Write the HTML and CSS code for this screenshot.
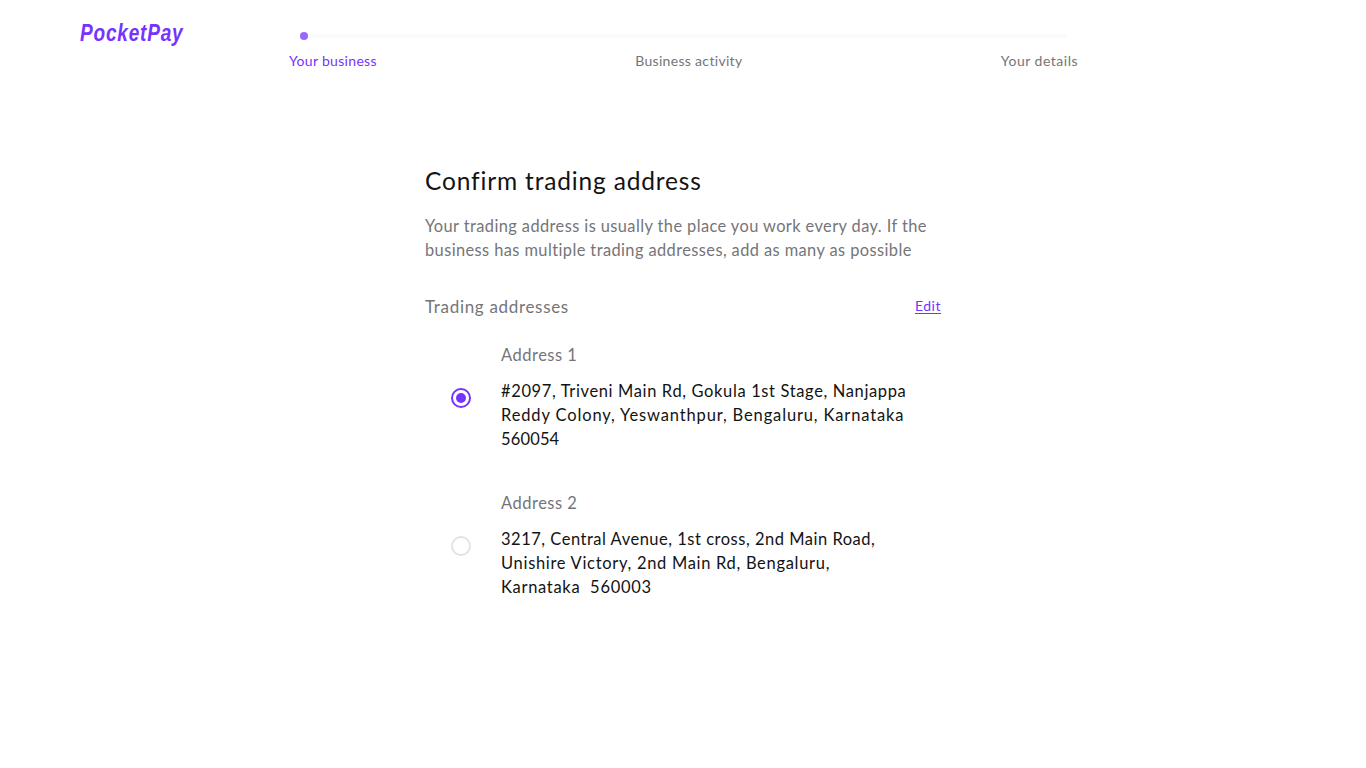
FILE: index.html
```html
<!DOCTYPE html>
<html lang="en">
<head>
<meta charset="utf-8">
<title>Confirm trading address</title>
<link rel="stylesheet" href="styles.css">
</head>
<body>
<header class="header">
  <div class="logo"><span class="logo-text">PocketPay</span></div>
  <nav class="progress">
    <div class="track"><span class="dot"></span></div>
    <div class="steps">
      <span class="step active">Your business</span>
      <span class="step">Business activity</span>
      <span class="step step-last">Your details</span>
    </div>
  </nav>
</header>
<main class="content">
  <h1 class="title">Confirm trading address</h1>
  <p class="intro">Your trading address is usually the place you work every day. If the<br>business has multiple trading addresses, add as many as possible</p>
  <div class="list-head">
    <h2 class="subtitle">Trading addresses</h2>
    <a class="edit" href="#">Edit</a>
  </div>
  <label class="address">
    <span class="radio checked"></span>
    <span class="details">
      <span class="name">Address 1</span>
      <span class="line">#2097, Triveni Main Rd, Gokula 1st Stage, Nanjappa</span>
      <span class="line wide">Reddy Colony, Yeswanthpur, Bengaluru, Karnataka</span>
      <span class="line postcode">560054</span>
    </span>
  </label>
  <label class="address">
    <span class="radio"></span>
    <span class="details">
      <span class="name">Address 2</span>
      <span class="line tight">3217, Central Avenue, 1st cross, 2nd Main Road,</span>
      <span class="line medium">Unishire Victory, 2nd Main Rd, Bengaluru,</span>
      <span class="line medium">Karnataka&nbsp; 560003</span>
    </span>
  </label>
</main>
</body>
</html>
```

FILE: styles.css
```css
* { box-sizing: border-box; }
body { margin: 0; background: #fff; font-family: Lato, sans-serif; font-variant-ligatures: none; color: #131313; }
.header { display: flex; height: 96px; padding: 19px 0 0 80px; }
.logo { width: 209px; color: #7633ff; font: italic bold 24px/28px "Liberation Sans", sans-serif; }
.logo-text { display: inline-block; letter-spacing: 1px; transform: scaleX(.793); transform-origin: left; }
.progress { width: 789px; padding-top: 15px; }
.track { display: flex; align-items: center; height: 4px; margin: 0 11px; background: #fafafa; border-radius: 2px; }
.dot { width: 8px; height: 8px; border-radius: 50%; background: #9b66ff; }
.steps { display: flex; justify-content: space-between; margin-top: 13px; font-size: 14px; line-height: 20px; letter-spacing: .32px; color: #757578; }
.steps .active { color: #7633ff; }
.step-last { letter-spacing: .5px; }
.content { width: 516px; margin: 69px 0 0 425px; }
.title { margin: 0; font-size: 24.5px; font-weight: 400; line-height: 32px; letter-spacing: .84px; }
.intro { margin: 17px 0 0; font-size: 16.4px; line-height: 24px; letter-spacing: .41px; color: #757578; white-space: nowrap; }
.list-head { display: flex; justify-content: space-between; align-items: flex-start; margin-top: 33px; height: 24px; }
.subtitle { margin: 0; font-size: 17px; font-weight: 400; line-height: 24px; letter-spacing: .68px; color: #757578; }
.edit { font-size: 14px; line-height: 20px; letter-spacing: .5px; padding-top: 1px; color: #7633ff; text-decoration-thickness: 1px; text-underline-offset: 2px; }
.address { display: flex; align-items: center; gap: 30px; height: 108px; margin: 24px 0 0 26px; }
.address + .address { margin-top: 40px; }
.radio { width: 20px; height: 20px; margin-top: 2px; border: 2px solid #e3e3e5; border-radius: 50%; }
.checked { display: grid; place-items: center; border-color: #7633ff; }
.checked::after { content: ""; width: 10px; height: 10px; border-radius: 50%; background: #7633ff; }
.details { font-size: 16.5px; line-height: 24px; letter-spacing: .63px; }
.name { display: block; margin-bottom: 12px; letter-spacing: .5px; color: #757578; }
.line { display: block; white-space: nowrap; }
.wide { letter-spacing: .86px; }
.medium { letter-spacing: .69px; }
.tight { letter-spacing: .51px; }
.postcode { letter-spacing: .15px; }
```
